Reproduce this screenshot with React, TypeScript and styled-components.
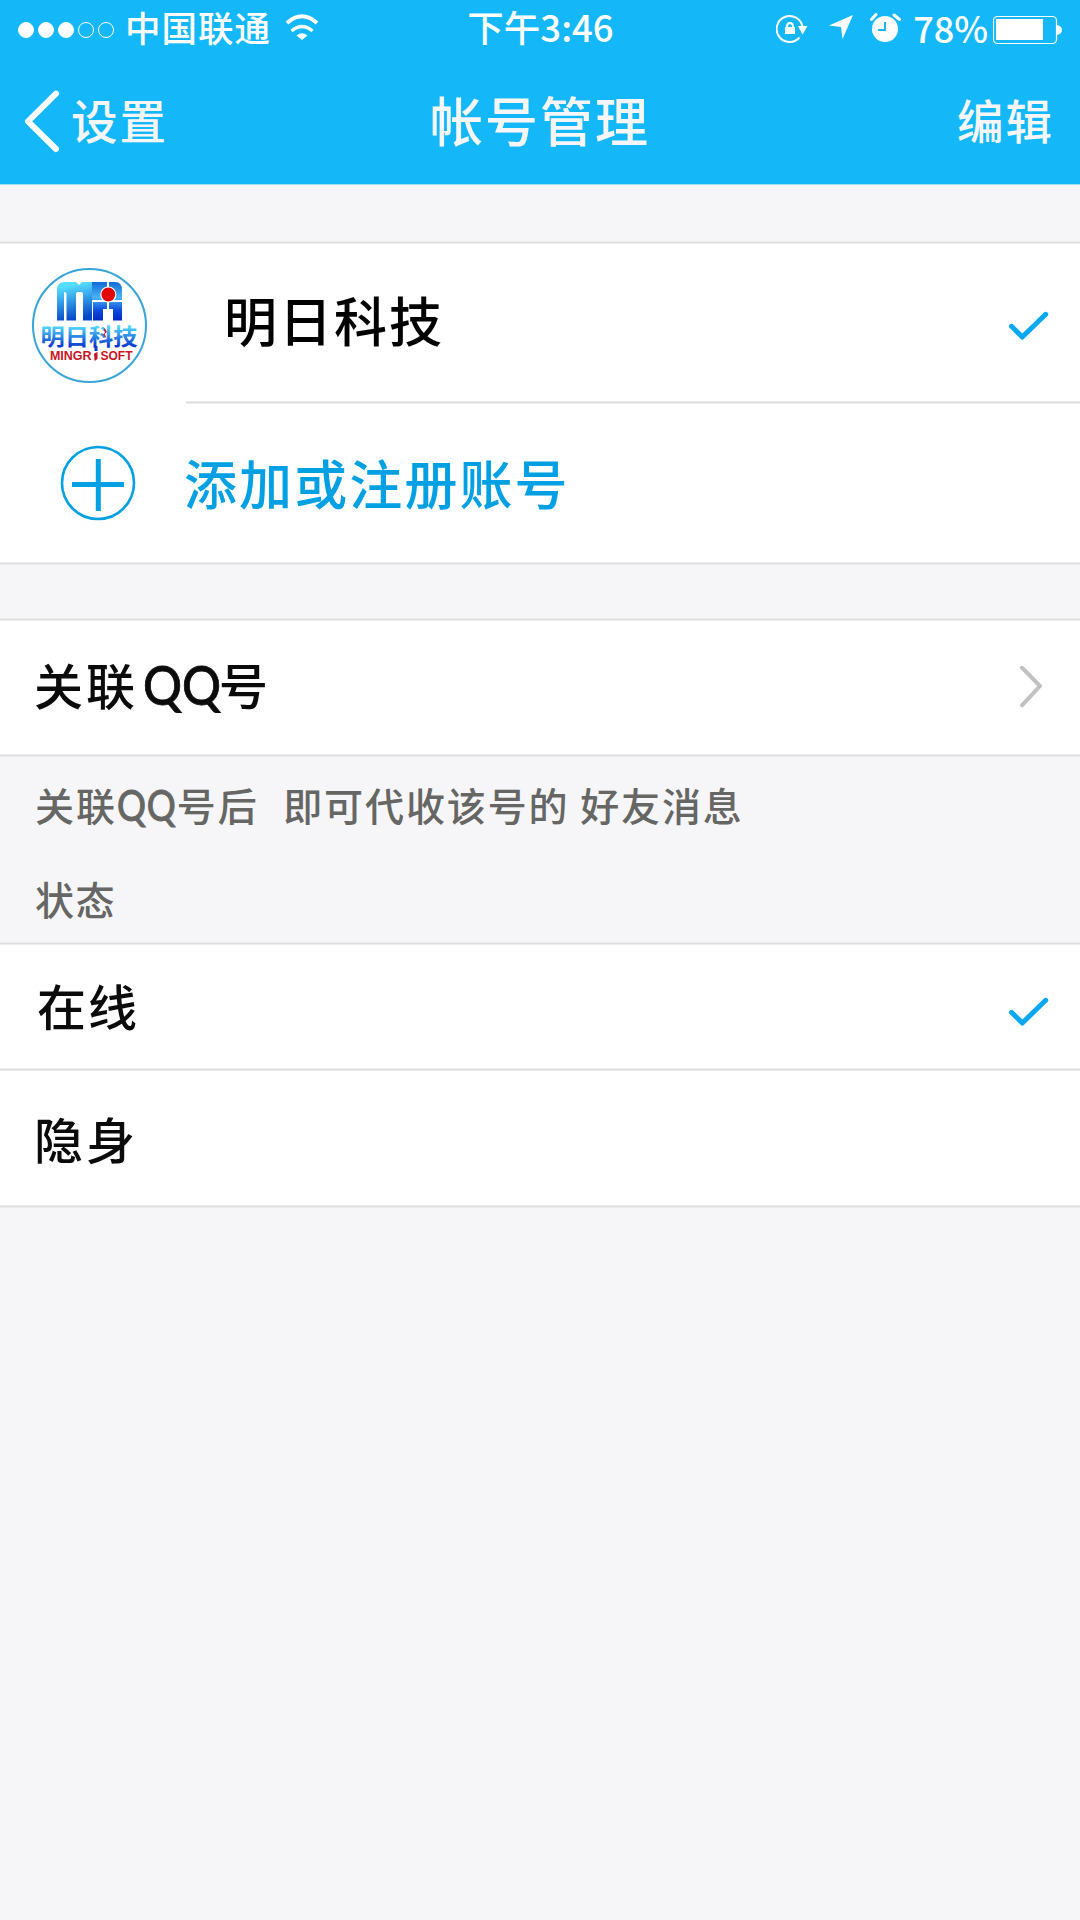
import React from 'react';
import styled, { createGlobalStyle } from 'styled-components';

const GlobalStyle = createGlobalStyle`
  * { box-sizing: border-box; }
  body { margin: 0; background: #f6f6f9; font-family: "Noto Sans CJK SC", "Noto Sans", sans-serif; }
`;

const Screen = styled.div`
  width: 1080px;
  height: 1920px;
  background: #f6f6f9;
  display: flex;
  flex-direction: column;
  overflow: hidden;
`;

const Header = styled.header`
  height: 185px;
  flex: none;
  background: #14b8f8;
  border-bottom: 1px solid #a0def8;
`;

const StatusBar = styled.div`
  height: 54px;
  display: grid;
  grid-template-columns: 1fr auto 1fr;
  align-items: center;
`;

const StatusSide = styled.div<{ $end?: boolean }>`
  height: 54px;
  display: flex;
  align-items: center;
  justify-content: ${p => (p.$end ? 'flex-end' : 'flex-start')};
  padding: ${p => (p.$end ? '0 17px 0 0' : '0 0 0 18px')};
`;

const Signal = styled.div`
  display: flex;
  gap: 4px;
  margin: 6px 11px 0 0;
`;

const Dot = styled.i<{ $on: boolean }>`
  width: 16px;
  height: 16px;
  border-radius: 50%;
  border: 1px solid #fff;
  background: ${p => (p.$on ? '#fff' : 'transparent')};
`;

const Text = styled.span<{ $size: number; $gap?: number; $color?: string; $ml?: number }>`
  font-size: ${p => p.$size}px;
  letter-spacing: ${p => p.$gap ?? 0}px;
  color: ${p => p.$color ?? '#fff'};
  margin-left: ${p => p.$ml ?? 0}px;
  font-weight: 500;
  line-height: 1;
  white-space: pre;
`;

const Latin = styled.span<{ $size: number; $width: number; $squeeze: number; $ml: number; $gap: number }>`
  display: inline-block;
  width: ${p => p.$width}px;
  margin-left: ${p => p.$ml}px;
  font-family: Lato, sans-serif;
  font-size: ${p => p.$size}px;
  letter-spacing: ${p => p.$gap}px;
  line-height: 1;
  -webkit-text-stroke: 0.8px currentColor;
  transform: scaleX(${p => p.$squeeze});
  transform-origin: left;
`;

const Wide = styled.span`
  letter-spacing: 3.5px;
`;

const Icon = styled.svg<{ $ml?: number; $mr?: number; $mt?: number }>`
  flex: none;
  display: block;
  fill: none;
  margin-left: ${p => p.$ml ?? 0}px;
  margin-right: ${p => p.$mr ?? 0}px;
  margin-top: ${p => p.$mt ?? 0}px;
`;

const NavBar = styled.nav`
  height: 130px;
  display: grid;
  grid-template-columns: 1fr auto 1fr;
  align-items: center;
  padding: 0 26px 0 22px;
`;

const NavButton = styled.button<{ $end?: boolean }>`
  border: 0;
  padding: 0;
  background: none;
  font-family: inherit;
  display: flex;
  align-items: center;
  justify-self: ${p => (p.$end ? 'end' : 'start')};
`;

const Group = styled.section<{ $top: number }>`
  margin-top: ${p => p.$top}px;
  background: #fff;
`;

const Line = styled.div<{ $inset?: number }>`
  height: 3px;
  margin-left: ${p => p.$inset ?? 0}px;
  background: linear-gradient(#ededee 0 1px, #dedee0 1px 2px, #ededee 2px 3px);
`;

const Row = styled.div<{ $h: number; $left: number; $right?: number; $top?: number }>`
  height: ${p => p.$h}px;
  display: flex;
  align-items: center;
  padding: ${p => p.$top ?? 0}px ${p => p.$right ?? 0}px 0 ${p => p.$left}px;
`;

const Title = styled.div<{ $ml?: number; $lift?: number }>`
  flex: 1;
  display: flex;
  align-items: center;
  margin-left: ${p => p.$ml ?? 0}px;
  padding-bottom: ${p => p.$lift ?? 0}px;
`;

const Notes = styled.div`
  height: 185px;
  padding: 27px 0 0 35px;
  display: flex;
  flex-direction: column;
  gap: 56px;
`;

const Note = styled(Text)`
  height: 39px;
  line-height: 39px;
`;

const Check = ({ drop = 0 }: { drop?: number }) => (
  <Icon $mt={drop} width="42" height="32" viewBox="1007 309 42 32">
    <path d="M1011.5 325.3 1022.3 336 1045.7 313.3" stroke="#03a8f3" strokeWidth="5" strokeLinecap="round" strokeLinejoin="round" />
  </Icon>
);

const Logo = () => (
  <Icon width="118" height="118" viewBox="31 267 118 118">
    <defs>
      <linearGradient id="m" x1="0" y1="0" x2="0.25" y2="1">
        <stop offset="0.15" stopColor="#55ddff" />
        <stop offset="1" stopColor="#0647c8" />
      </linearGradient>
      <linearGradient id="r" x1="0" y1="0" x2="0" y2="1">
        <stop offset="0" stopColor="#1268d8" />
        <stop offset="0.4" stopColor="#4bb4f4" />
        <stop offset="0.75" stopColor="#0c48dc" />
        <stop offset="1" stopColor="#0328c8" />
      </linearGradient>
      <linearGradient id="t" x1="0" y1="0" x2="0" y2="1">
        <stop offset="0.25" stopColor="#4fd4fb" />
        <stop offset="0.85" stopColor="#0838d0" />
      </linearGradient>
    </defs>
    <circle cx="89.5" cy="325.5" r="56.5" fill="#fff" stroke="#38a4d8" strokeWidth="2" />
    <path d="M57 320.500V290Q57 282 65 282H76L79 285 82 282H103V292H92V320.500H83V294Q83 292 81 292H78Q76 292 76 294V320.500H66.500V294Q66.500 292 64 292V320.500Z" fill="url(#m)" />
    <path d="M92 282H107V300H92ZM109 282H115Q122 282 122 290V300H109ZM93 302H107V309H103V320.500H93ZM109 302H122V320.500H113V309H109Z" fill="url(#r)" />
    <circle cx="108.300" cy="294.500" r="7.500" fill="#e30606" stroke="#fff" strokeWidth="1.200" />
    <text x="40.500" y="345" fontSize="22.500" fontWeight="700" textLength="97" lengthAdjust="spacingAndGlyphs" fill="url(#t)">明日科技</text>
    <path d="M103.500 327 107 332 104.500 334 107 339 103 334.500 105 332.500Z" fill="#d81018" />
    <g fill="#c81424" fontFamily="Liberation Sans, sans-serif" fontWeight="700" fontSize="12">
      <text x="50" y="359.500" textLength="41.500" lengthAdjust="spacingAndGlyphs">MINGR</text>
      <text x="100.500" y="359.500" textLength="32" lengthAdjust="spacingAndGlyphs">SOFT</text>
    </g>
    <path d="M96 346V351" stroke="#0838d0" strokeWidth="3" />
    <path d="M94 353.500 97.500 352V359L94.500 361Z" fill="#c81424" />
  </Icon>
);

export default function App() {
  return (
    <Screen>
      <GlobalStyle />
      <Header>
        <StatusBar>
          <StatusSide>
            <Signal>
              {[true, true, true, false, false].map((on, i) => <Dot key={i} $on={on} />)}
            </Signal>
            <Text $size={35.5} $gap={1}>中国联通</Text>
            <Icon $ml={14} width="34" height="28" viewBox="286 13 34 28">
              <path d="M288 23Q303 9.500 318 23" stroke="#fff" strokeWidth="4" />
              <path d="M292.500 31Q303 22 313.500 31" stroke="#fff" strokeWidth="3.200" />
              <path d="M297.500 35.500Q303 31 308.500 35.500L303 40Z" fill="#fff" />
            </Icon>
          </StatusSide>
          <Text $size={36.5} $ml={1}>下午3:46</Text>
          <StatusSide $end>
            <Icon $mt={2} width="32" height="30" viewBox="776 13 32 30">
              <path d="M799.500 37.500A13 13 0 1 1 802.500 27" stroke="#fff" strokeWidth="2" />
              <path d="M798 26H807.500L802.500 34.500Z" fill="#fff" />
              <path d="M785 27H795V34H785Z" fill="#fff" />
              <path d="M787 28V26.500Q787 23 790 23T793 26.500V28" stroke="#fff" strokeWidth="2" />
            </Icon>
            <Icon $ml={21} width="25" height="26" viewBox="829 14 25 26">
              <path d="M853 15 842.500 39 841 27 829 25.500Z" fill="#fff" />
            </Icon>
            <Icon $ml={16} $mt={2} width="32" height="30" viewBox="870 13 32 30">
              <circle cx="885" cy="29" r="13" fill="#fff" />
              <path d="M871.500 19.500 876 14.500M894 15 899.500 19.500" stroke="#fff" strokeWidth="3" strokeLinecap="round" />
              <path d="M885 22V30H878" stroke="#14b8f8" strokeWidth="2" />
            </Icon>
            <Text $size={36} $ml={11}>78%</Text>
            <Icon $ml={5} $mt={5} width="70" height="30" viewBox="993 15 70 30">
              <rect x="993.500" y="16.500" width="63" height="27" rx="4" stroke="#fff" strokeWidth="1.200" />
              <rect x="996" y="19" width="47" height="21" fill="#fff" />
              <path d="M1057 25Q1062 26 1062 30T1057 35Z" fill="#fff" />
            </Icon>
          </StatusSide>
        </StatusBar>
        <NavBar>
          <NavButton>
            <Icon $mr={9} $mt={4} width="40" height="64" viewBox="22 89 40 64">
              <path d="M56 93.700 28 121.300 56 149" stroke="#fff" strokeWidth="6" strokeLinecap="round" strokeLinejoin="round" />
            </Icon>
            <Text $size={46.5} $gap={2} $color="#f6f6f9">设置</Text>
          </NavButton>
          <Text $size={53} $gap={2} $ml={4} $color="#f6f6f9">帐号管理</Text>
          <NavButton $end>
            <Text $size={46.5} $gap={2} $color="#f6f6f9">编辑</Text>
          </NavButton>
        </NavBar>
      </Header>

      <Group $top={56}>
        <Line />
        <Row $h={157} $left={31} $right={31} $top={6}>
          <Logo />
          <Title $ml={75} $lift={12}><Text $size={53} $gap={2} $color="#000">明日科技</Text></Title>
          <Check />
        </Row>
        <Line $inset={186} />
        <Row $h={158} $left={60}>
          <Icon width="76" height="76" viewBox="60 445 76 76">
            <circle cx="98" cy="483" r="36" stroke="#00a0e2" strokeWidth="2.600" />
            <path d="M98.300 459V511M72 484.500H124" stroke="#00a0e2" strokeWidth="5" />
          </Icon>
          <Title $ml={48} $lift={2}><Text $size={53} $gap={2.1} $color="#00a0e2">添加或注册账号</Text></Title>
        </Row>
        <Line />
      </Group>

      <Group $top={53}>
        <Line />
        <Row $h={133} $left={34} $right={36}>
          <Title $lift={6}>
            <Text $size={49} $gap={3} $color="#0b0b0b">
              关联<Latin $size={54} $width={76} $squeeze={0.9} $ml={5} $gap={0}>QQ</Latin>号
            </Text>
          </Title>
          <Icon width="26" height="44" viewBox="1018 666 26 44">
            <path d="M1022 667.700 1040 686 1022 705.300" stroke="#c1c1c1" strokeWidth="4" strokeLinecap="round" strokeLinejoin="round" />
          </Icon>
        </Row>
        <Line />
      </Group>

      <Notes>
        <Note $size={39} $gap={1.9} $color="#666664">
          关联<Latin $size={42} $width={60} $squeeze={0.86} $ml={0} $gap={1}>QQ</Latin>号后<Wide>{'  '}</Wide>即可代收该号的 好友消息
        </Note>
        <Note $size={39} $gap={1.6} $color="#666664">状态</Note>
      </Notes>

      <Group $top={0}>
        <Line />
        <Row $h={123} $left={37} $right={31}>
          <Title $lift={4}><Text $size={49} $gap={2} $color="#0b0b0b">在线</Text></Title>
          <Check drop={10} />
        </Row>
        <Line />
        <Row $h={134} $left={34}>
          <Title $lift={1}><Text $size={49} $gap={3} $color="#0b0b0b">隐身</Text></Title>
        </Row>
        <Line />
      </Group>
    </Screen>
  );
}
